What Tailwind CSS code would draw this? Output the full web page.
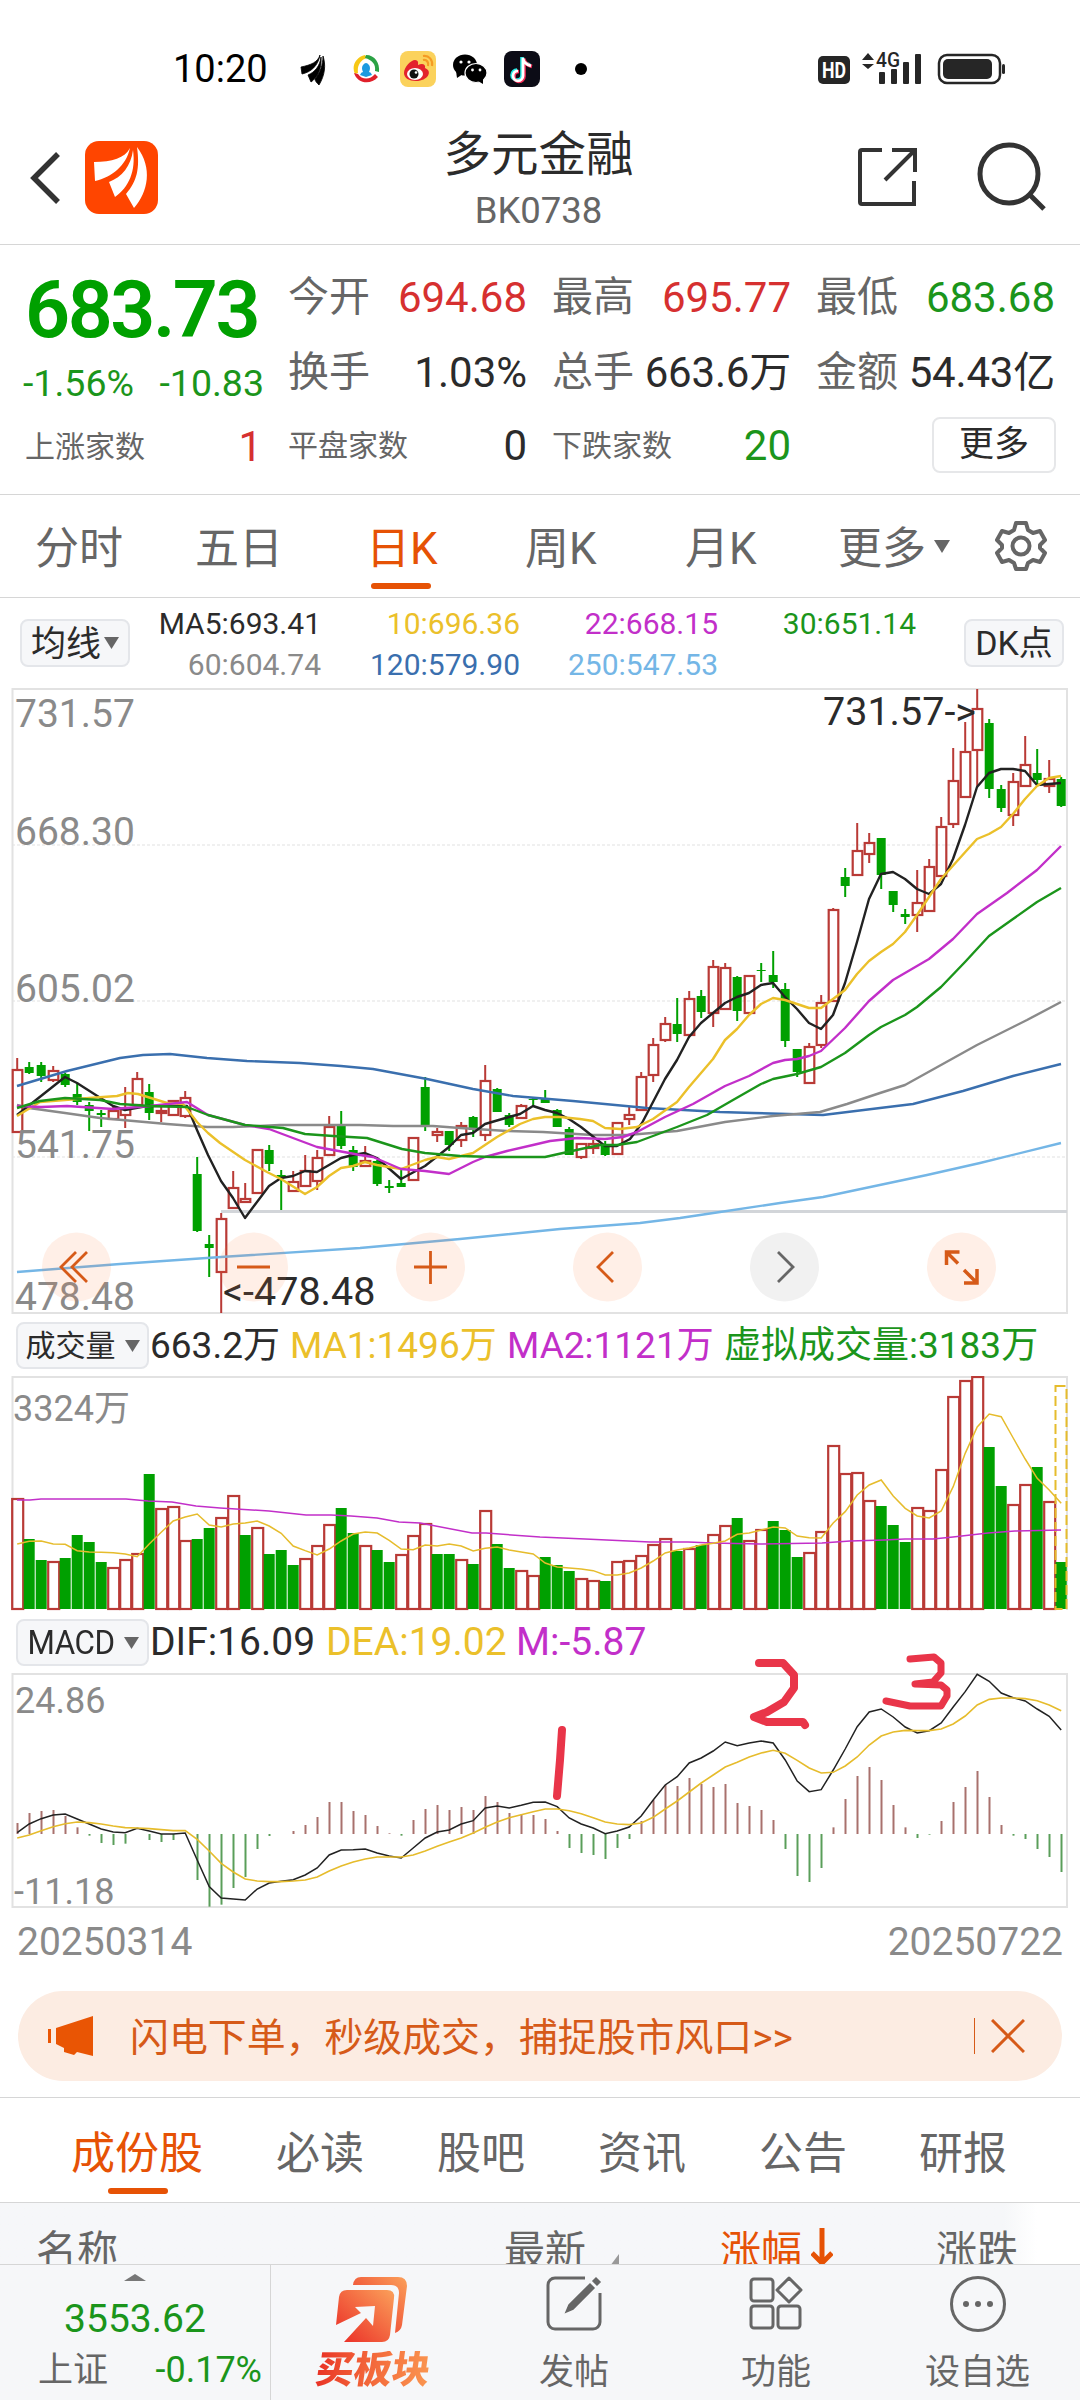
<!DOCTYPE html>
<html lang="zh-CN">
<head>
    <meta charset="UTF-8">
    <meta name="viewport" content="width=device-width, initial-scale=1.0">
    <title>多元金融 BK0738</title>
    <script src="https://cdn.jsdelivr.net/npm/@tailwindcss/browser@4"></script>
</head>
<body class="w-[1080px] h-[2400px] overflow-hidden bg-white text-[#2b2b2b] leading-none whitespace-nowrap font-['Roboto','Noto_Sans_CJK_SC',sans-serif]">
<div class="flex flex-col h-[2400px]">
    <!-- Status bar -->
    <div class="h-[138px] shrink-0 flex items-center pl-[173px] pr-[74px] text-black">
        <span class="w-[93px] text-[38px]">10:20</span>
        <svg class="ml-[34px] w-[28px] h-[32px]" viewBox="0 0 28 32">
            <path d="M20 2C18 9 11 12 1 14l1 7c9-2 16-8 18-19zM21 4c-1 9-6 15-13 18l3 7c6-4 11-13 10-25zM23 3c3 9 2 19-4 29-2-2-4-4-4-6 5-6 8-14 8-23z" stroke="#000" stroke-width=".8"/>
        </svg>
        <svg class="ml-[24px] w-[28px] h-[30px]" viewBox="0 0 28 30">
            <path d="M3 20C-1 12 4 3 13 1l2 3C8 6 5 12 6 19z" fill="#f7c815"/>
            <path d="M14 1c9 0 14 8 13 17l-4-1C24 10 20 6 13 4z" fill="#2ba245"/>
            <path d="M2 19c3 10 16 13 24 4l-3-3c-5 6-13 6-17 0z" fill="#e0202b"/>
            <path d="M8 21q1-3 3-3-2-4 0-7 3-4 6 0 2 3 0 7 2 0 3 3l-6 2z" fill="#1b9ae0"/>
        </svg>
        <svg class="ml-[20px] w-[36px] h-[36px]" viewBox="0 0 36 36">
            <rect width="36" height="36" rx="8" fill="#fbd25c"/>
            <path d="M4 22c0-6 7-13 11-13 4 0 3 4 3 5 4-2 8-1 7 3 8 3 3 13-9 13-7 0-12-3-12-8z" fill="#e3222c"/>
            <ellipse cx="15" cy="23" rx="8" ry="6" fill="#fff"/>
            <circle cx="14" cy="23" r="4.500" fill="#111"/><circle cx="16" cy="21.500" r="1.300" fill="#fff"/>
            <path d="M23 5c6-1 10 4 9 10M23 9c4-1 6 3 5 6" fill="none" stroke="#f59b23" stroke-width="2.200"/>
        </svg>
        <svg class="ml-[17px] w-[34px] h-[30px]" viewBox="0 0 34 30">
            <ellipse cx="12" cy="11" rx="12" ry="10.500"/><path d="M3 17l1 7 6-4z"/>
            <ellipse cx="23" cy="19" rx="11" ry="9.500" stroke="#fff" stroke-width="1.200"/><path d="M25 27l5 3 0-6z"/>
            <g fill="#fff"><circle cx="8" cy="8" r="1.600"/><circle cx="16" cy="8" r="1.600"/><circle cx="19.500" cy="16" r="1.400"/><circle cx="27" cy="16" r="1.400"/></g>
        </svg>
        <svg class="ml-[17px] w-[36px] h-[36px]" viewBox="0 0 36 36">
            <rect width="36" height="36" rx="8" fill="#0c0c16"/>
            <g fill="none" stroke-width="3.600"><path d="M18 6v18a5 5 0 1 1-5-5M18 7c1 4 4 6 8 7" stroke="#25e9e4"/><path d="M20 7.500v18a5 5 0 1 1-5-5M20 8.500c1 4 4 6 8 7" stroke="#f52b57"/><path d="M19 6.800v18a5 5 0 1 1-5-5M19 7.800c1 4 4 6 8 7" stroke="#fff" stroke-width="2.800"/></g>
        </svg>
        <span class="ml-[35px] size-[12px] rounded-full bg-black"></span>
        <svg class="ml-auto w-[188px] h-[34px]" viewBox="0 0 188 34" fill="#262626">
            <rect x="0" y="4" width="32" height="28" rx="5"/>
            <text x="16" y="26" font-size="22" font-weight="700" fill="#fff" text-anchor="middle" textLength="24" lengthAdjust="spacingAndGlyphs">HD</text>
            <path d="M44 8l6-7 6 7zM44 12l6 5 6-5z"/>
            <text x="58" y="15" font-size="20" font-weight="500" textLength="24" lengthAdjust="spacingAndGlyphs">4G</text>
            <rect x="61" y="20" width="6" height="12" rx="1"/><rect x="73" y="17" width="6" height="15" rx="1"/><rect x="85" y="10" width="6" height="22" rx="1"/><rect x="97" y="2" width="6" height="30" rx="1"/>
            <rect x="121" y="3" width="61" height="28" rx="8" fill="none" stroke="#262626" stroke-width="2.500"/>
            <rect x="125" y="7" width="49" height="20" rx="5"/><rect x="184" y="12" width="3" height="10" rx="1.500"/>
        </svg>
    </div>

    <!-- Title bar -->
    <header class="h-[107px] shrink-0 grid grid-cols-3 items-start border-b border-[#d6d6d6]">
        <div class="flex items-center pl-[29px] pt-[3px]">
            <svg class="w-[32px] h-[56px]" viewBox="0 0 32 56"><path d="M29 4L5 28l24 24" fill="none" stroke="#333" stroke-width="5.500"/></svg>
            <svg class="ml-[24px] w-[73px] h-[73px]" viewBox="0 0 73 73">
                <rect width="73" height="73" rx="14" fill="#ff4500"/>
                <path d="M45 7C40 17 27 21 9 21L10 40C27 36 41 25 45 7zM48 9c-2 16-11 27-24 32l6 15C44 46 51 30 48 9zM52 6c3 22 0 34-11 47l8 14C63 51 68 27 52 6z" fill="#fff"/>
            </svg>
        </div>
        <div class="flex flex-col items-center pr-[3px]">
            <h1 class="-mt-[6px] text-[47.500px]">多元金融</h1>
            <span class="mt-[13px] text-[36.500px] text-[#666]">BK0738</span>
        </div>
        <div class="flex items-center justify-end pr-[33px] pt-[4px] gap-[59px]">
            <svg class="w-[60px] h-[60px]" viewBox="0 0 60 60" fill="none" stroke="#333" stroke-width="4">
                <path d="M24 3H4a2 2 0 0 0-2 2v50a2 2 0 0 0 2 2h52V34"/><path d="M34 3h23v22M57 3L27 33"/>
            </svg>
            <svg class="w-[70px] h-[70px]" viewBox="0 0 70 70" fill="none" stroke="#333" stroke-width="5">
                <circle cx="32" cy="32" r="29"/><path d="M53 53l14 14"/>
            </svg>
        </div>
    </header>

    <!-- Quote -->
    <section class="h-[250px] shrink-0 flex border-b border-[#d6d6d6]">
        <div class="w-[264px] pl-[25px] flex flex-col text-[#00a000]">
            <span class="mt-[26px] h-[78px] text-[79px] font-semibold tracking-[-2.500px]">683.73</span>
            <div class="mt-[14px] flex justify-between text-[37.500px] text-[#1b951b] pt-[2px] -ml-[2px]"><span>-1.56%</span><span>-10.83</span></div>
            <div class="mt-[24px] h-[41px] flex justify-between items-center pr-[2px]"><span class="text-[30px] text-[#666]">上涨家数</span><span class="text-[42px] text-[#d63030]">1</span></div>
        </div>
        <div class="grow ml-[24px] mr-[24px] pt-[32px] grid grid-cols-[239px_239px_239px] gap-x-[25px] grid-rows-[75px_73px_41px] text-[42px] *:h-[41px] *:flex *:items-center *:justify-between">
            <div><span class="text-[41px] text-[#666]">今开</span><span class="text-[#d63030]">694.68</span></div>
            <div><span class="text-[41px] text-[#666]">最高</span><span class="text-[#d63030]">695.77</span></div>
            <div><span class="text-[41px] text-[#666]">最低</span><span class="text-[#1b951b]">683.68</span></div>
            <div><span class="text-[41px] text-[#666]">换手</span><span>1.03%</span></div>
            <div><span class="text-[41px] text-[#666]">总手</span><span class="tracking-[-0.200px]">663.6万</span></div>
            <div><span class="text-[41px] text-[#666]">金额</span><span class="tracking-[-0.200px]">54.43亿</span></div>
            <div><span class="text-[30px] text-[#666]">平盘家数</span><span>0</span></div>
            <div><span class="text-[30px] text-[#666]">下跌家数</span><span class="text-[#1b951b]">20</span></div>
            <div><button class="ml-auto -mr-[1px] -mt-[2px] w-[124px] h-[56px] shrink-0 border-2 border-[#e6e7e9] rounded-lg text-[35px]">更多</button></div>
        </div>
    </section>

    <!-- Period tabs -->
    <nav class="h-[103px] shrink-0 flex items-center border-b border-[#d6d6d6] pl-[35px] pt-[6px] pr-[33px] text-[44px] text-[#666]">
        <span class="w-[160px]">分时</span>
        <span class="w-[171px]">五日</span>
        <span class="w-[159px] h-full relative flex items-center text-[#e65205]">日K<i class="absolute left-[5px] bottom-[8px] w-[60px] h-[6px] rounded-full bg-[#e65205]"></i></span>
        <span class="w-[160px]">周K</span>
        <span class="w-[153px]">月K</span>
        <span class="flex items-center">更多<svg class="ml-[8px] -mt-[5px] w-[16px] h-[13px]" viewBox="0 0 16 13"><path d="M0 0h16L8 13z" fill="#666"/></svg></span>
        <svg class="ml-auto -mt-[6px] w-[52px] h-[52px]" viewBox="0 0 52 52" fill="none" stroke="#666" stroke-width="4" stroke-linejoin="round">
            <path d="M21 3h10l2 7 5 3 7-2 5 9-5 5v3l5 5-5 9-7-2-5 3-2 6H21l-2-6-5-3-7 2-5-9 5-5v-3l-5-5 5-9 7 2 5-3z"/><circle cx="26" cy="26" r="8.500"/>
        </svg>
    </nav>

    <!-- Moving averages -->
    <div class="h-[90px] shrink-0 flex items-center pl-[20px] pr-[16px]">
        <button class="w-[110px] h-[48px] border-2 border-[#e4e6ea] rounded-lg bg-[#f6f7f9] text-[35px] pt-[3px] flex items-center justify-center gap-[3px]">均线<svg class="-mt-[3px] w-[15px] h-[12px]" viewBox="0 0 15 12"><path d="M0 0h15L7.500 12z" fill="#666"/></svg></button>
        <div class="w-[787px] pt-[2px] grid grid-cols-[191px_199px_198px_198px] gap-y-[11px] text-[30px] text-right">
            <span>MA5:693.41</span><span class="text-[#ebc02a]">10:696.36</span><span class="text-[#c22fc9]">22:668.15</span><span class="text-[#1b951b]">30:651.14</span>
            <span class="text-[#8a8a8a]">60:604.74</span><span class="text-[#3a6fae]">120:579.90</span><span class="text-[#74b6e6]">250:547.53</span>
        </div>
        <button class="ml-auto w-[100px] h-[48px] border-2 border-[#e4e6ea] rounded-lg bg-[#f6f7f9] text-[34px]">DK点</button>
    </div>

    <!-- Candles -->
    <svg class="w-[1080px] h-[628px] shrink-0" viewBox="0 688 1080 628" fill="none">
        <path d="M12 845H1066M12 1001H1066M12 1157H1066" stroke="#ebebeb" stroke-width="1.500" stroke-dasharray="3 2"/>
        <path d="M12.500 689H1067V1313H12.500z" stroke="#e2e2e2" stroke-width="2"/>
        <g id="candles"></g>
        <path d="M221 1211.500H1067" stroke="#d2d5d9" stroke-width="3"/>
        <g stroke-width="2.400" stroke-linejoin="round">
            <polyline stroke="#74b6e6" points="17,1272 120,1264 221,1257 360,1248 460,1239 560,1229 640,1223 680,1218 720,1212 780,1203 823,1197 927,1175 980,1163 1061,1143"/>
            <polyline stroke="#3a6fae" points="17,1086 67,1071 120,1058 143,1055 170,1054 207,1058 247,1061 300,1063 341,1066 373,1069 427,1079 473,1089 513,1096 573,1101 647,1108 720,1112 753,1113 823,1115 880,1108 913,1104 963,1091 1013,1076 1061,1064"/>
            <polyline stroke="#8a8a8a" points="17,1105 29,1108 65,1113 100,1118 167,1124 207,1127 233,1127 280,1125 360,1125 393,1126 433,1126 460,1128 507,1131 543,1132 593,1135 627,1135 677,1131 725,1122 773,1116 820,1112 847,1104 880,1093 905,1085 977,1045 1027,1020 1061,1002"/>
            <polyline stroke="#222" points="17,1115 65,1077 77,1083 113,1106 125,1110 147,1106 187,1106 197,1130 208,1155 221,1181 233,1198 245,1218 269,1186 281,1178 293,1176 305,1171 317,1172 341,1158 353,1155 365,1153 377,1158 401,1179 425,1166 449,1147 461,1135 473,1133 485,1124 509,1117 520,1114 533,1106 545,1110 557,1113 569,1119 581,1127 605,1146 617,1146 630,1139 642,1123 653,1102 665,1079 677,1060 689,1037 701,1023 713,1013 725,1003 737,997 749,993 761,985 773,983 785,997 797,1009 809,1023 821,1029 833,1015 845,983 857,942 869,899 881,874 893,872 905,879 917,889 929,894 941,884 953,859 965,825 977,787 989,773 1001,769 1013,769 1025,771 1037,785 1049,784 1061,783"/>
            <polyline stroke="#ebc02a" points="17,1116 40,1102 65,1100 89,1098 117,1096 128,1093 138,1094 167,1103 183,1104 197,1122 208,1133 220,1143 245,1160 267,1172 281,1179 305,1194 317,1187 329,1176 341,1168 353,1166 365,1162 377,1165 401,1169 425,1160 437,1157 449,1159 473,1153 497,1137 520,1124 533,1119 545,1117 560,1117 580,1119 593,1121 605,1128 620,1129 637,1127 653,1119 677,1102 689,1087 713,1059 725,1040 737,1029 749,1015 761,1004 773,998 785,1000 797,1004 809,1008 821,1008 833,999 845,990 857,974 869,961 881,952 893,944 905,932 917,915 929,897 941,879 977,839 989,834 1001,827 1013,814 1025,799 1037,786 1049,778 1061,776"/>
            <polyline stroke="#c22fc9" points="17,1106 41,1107 67,1106 113,1109 150,1106 187,1102 208,1115 245,1125 269,1129 317,1147 360,1155 373,1157 401,1169 425,1171 449,1174 473,1162 485,1157 507,1151 533,1145 550,1141 577,1138 605,1139 623,1137 637,1132 665,1117 693,1104 725,1086 749,1076 773,1063 785,1060 797,1059 809,1056 821,1051 845,1028 869,1001 893,980 929,959 953,939 977,914 1007,893 1037,870 1061,846"/>
            <polyline stroke="#1b951b" points="17,1108 40,1101 65,1098 100,1100 120,1104 150,1106 187,1107 208,1115 245,1125 283,1128 305,1134 333,1136 367,1138 402,1149 425,1153 460,1156 493,1157 545,1157 581,1149 600,1145 617,1145 637,1142 677,1127 707,1115 733,1100 761,1084 773,1079 797,1074 821,1067 845,1053 869,1035 881,1027 905,1015 917,1007 941,987 965,962 989,936 1013,919 1037,902 1061,888"/>
        </g>
        <g fill="#8a8a8a" font-size="39">
            <text x="15" y="727">731.57</text><text x="15" y="845">668.30</text><text x="15" y="1002">605.02</text><text x="15" y="1158">541.75</text><text x="15" y="1310">478.48</text>
        </g>
        <g fill="#2b2b2b" font-size="39.500"><text x="823" y="725">731.57-&gt;</text><text x="223" y="1305">&lt;-478.48</text></g>
        <!-- Chart controls -->
        <g fill="#fb7a3a" fill-opacity=".12">
            <circle cx="76.500" cy="1267" r="34.500"/><circle cx="253.500" cy="1267" r="34.500"/><circle cx="430.500" cy="1267" r="34.500"/><circle cx="607.500" cy="1267" r="34.500"/><circle cx="784.500" cy="1267" r="34.500" fill="#888"/><circle cx="961.500" cy="1267" r="34.500"/>
        </g>
        <g stroke="#d65a18" stroke-width="2.800">
            <path d="M76 1252l-15 15 15 15M87 1252l-15 15 15 15M237 1267h33M414 1267h33M430.500 1251v33M613 1252l-15 15 15 15"/>
            <path d="M778 1252l15 15-15 15" stroke="#666"/>
            <path d="M946.500 1265v-13h13M947 1252.500l11 11M977 1269v14h-13M976 1282l-12-12" stroke-width="3.500"/>
        </g>
    </svg>

    <!-- Volume -->
    <div class="h-[60px] shrink-0 flex items-center pl-[16px] pb-[1px] text-[37px]">
        <button class="w-[133px] h-[47px] shrink-0 border-2 border-[#e4e6ea] rounded-lg bg-[#f6f7f9] text-[30px] flex items-center justify-center gap-[9px]">成交量<svg class="w-[15px] h-[12px]" viewBox="0 0 15 12"><path d="M0 0h15L7.500 12z" fill="#666"/></svg></button>
        <span class="w-[141px] pl-[1px]">663.2万</span>
        <span class="w-[217px] text-[#ebc02a]">MA1:1496万</span>
        <span class="w-[217px] text-[#c22fc9]">MA2:1121万</span>
        <span class="text-[#1b951b]">虚拟成交量:3183万</span>
    </div>
    <svg class="w-[1080px] h-[236px] shrink-0" viewBox="0 1376 1080 236" fill="none">
        <path d="M12.500 1610V1377H1067V1610" stroke="#e2e2e2" stroke-width="2"/>
        <text x="13" y="1421" font-size="36" fill="#8a8a8a">3324万</text>
        <g id="volume"></g>
        <rect x="1055.500" y="1386" width="11" height="223" stroke="#e6bc2c" stroke-width="2" stroke-dasharray="10 4"/>
        <polyline stroke="#c22fc9" stroke-width="1.500" points="17,1500 30,1500 41,1499 126,1499 148,1501 172,1502 196,1506 220,1508 269,1511 306,1515 331,1515 351,1516 377,1518 399,1522 420,1523 472,1533 486,1533 540,1537 585,1539 650,1542 688,1542 712,1543 760,1544 822,1543 850,1541 884,1540 905,1539 933,1539 953,1537 988,1533 1015,1531 1061,1530"/>
        <polyline id="vol_ma" stroke="#e6bc2c" stroke-width="1.500"/>
    </svg>

    <!-- MACD -->
    <div class="h-[61px] shrink-0 flex items-center pl-[16px] text-[39px]">
        <button class="w-[133px] h-[47px] shrink-0 border-2 border-[#e4e6ea] rounded-lg bg-[#f6f7f9] text-[33px] flex items-center justify-center gap-[9px]"><span class="w-[90px] flex justify-center origin-center scale-x-95 tracking-[-0.500px]">MACD</span><svg class="-ml-[1px] w-[15px] h-[12px]" viewBox="0 0 15 12"><path d="M0 0h15L7.500 12z" fill="#666"/></svg></button>
        <span class="w-[177px] pl-[1px]">DIF:16.09</span>
        <span class="w-[190px] text-[#ebc02a]">DEA:19.02</span>
        <span class="text-[#c22fc9]">M:-5.87</span>
    </div>
    <svg class="w-[1080px] h-[297px] shrink-0 overflow-visible" viewBox="0 1673 1080 297" fill="none">
        <path d="M12.500 1674H1067V1907H12.500z" stroke="#e2e2e2" stroke-width="2"/>
        <g id="macd"></g>
        <polyline id="dif" stroke="#222" stroke-width="1.500"/>
        <polyline id="dea" stroke="#e6bc2c" stroke-width="1.600"/>
        <g fill="#8a8a8a">
            <text x="15" y="1713" font-size="36">24.86</text><text x="14" y="1904" font-size="36">-11.18</text>
            <text x="17" y="1955" font-size="39">20250314</text><text x="1063" y="1955" font-size="39" text-anchor="end">20250722</text>
        </g>
        <!-- Hand-drawn wave marks -->
        <g stroke="#e93549" stroke-width="8" stroke-linecap="round" stroke-linejoin="round">
            <path d="M562 1730l-2 30-3 36"/>
            <path d="M759 1663h24l11 12v13l-10 14-17 10-13 5 13 5h36l2 3"/>
            <path d="M910 1659l24-2 7 6v10l-8 9-18 2 26 1 6 5v6l-6 10h-31l-24-5" stroke-width="7"/>
        </g>
    </svg>

    <!-- Notice -->
    <div class="mt-[21px] h-[90px] shrink-0 mx-[18px] rounded-full bg-[#fcece2] flex items-center pl-[29px] pr-[37px] text-[#d65a18]">
        <svg class="w-[46px] h-[40px]" viewBox="0 0 46 40" fill="#e95504"><path d="M1 13h3v14H1zM9 12L46 0v40l-16-4-3 3-10-3v-4l-8-4z"/></svg>
        <span class="ml-[37px] pt-[4px] text-[38.900px]">闪电下单，秒级成交，捕捉股市风口&gt;&gt;</span>
        <i class="ml-auto w-[1.500px] h-[36px] bg-[#d65a18]"></i>
        <svg class="ml-[16px] w-[34px] h-[34px]" viewBox="0 0 34 34"><path d="M1 1l32 32M33 1L1 33" stroke="#d65a18" stroke-width="3"/></svg>
    </div>

    <!-- Section tabs -->
    <nav class="mt-[16px] h-[106px] shrink-0 flex items-center border-y border-[#d6d6d6] pl-[71px] pt-[7px] text-[44px] text-[#666]">
        <span class="w-[205px] h-full relative flex items-center text-[#e65205]">成份股<i class="absolute left-[37px] bottom-[8px] w-[60px] h-[6px] rounded-full bg-[#e65205]"></i></span>
        <span class="w-[161px]">必读</span>
        <span class="w-[161px]">股吧</span>
        <span class="w-[161px]">资讯</span>
        <span class="w-[160px]">公告</span>
        <span>研报</span>
    </nav>

    <!-- Table header, cut by the bottom bar -->
    <div class="h-[61px] shrink-0 overflow-hidden flex pt-[28px] pl-[36px] bg-linear-to-r from-[#f6f7f9] from-93% to-white to-96% text-[41px] text-[#666]">
        <span class="w-[468px]">名称</span>
        <span class="w-[216px] flex">最新<svg class="ml-[24px] mt-[23px] w-[9px] h-[12px]" viewBox="0 0 9 12"><path d="M9 0v12H0z" fill="#999"/></svg></span>
        <span class="w-[216px] flex text-[#e65205]">涨幅<svg class="ml-[9px] -mt-[3px] w-[22px] h-[38px]" viewBox="0 0 22 38" fill="none" stroke="#e65205" stroke-width="5"><path d="M11 0v35M1 25l10 10 10-10"/></svg></span>
        <span>涨跌</span>
    </div>

    <!-- Bottom bar -->
    <footer class="grow flex border-t border-[#d6d6d6] bg-[#f6f7f9] text-[35px] text-[#666]">
        <div class="w-[271px] border-r border-[#d6d6d6] flex flex-col items-center pt-[9px]">
            <svg class="w-[22px] h-[7px]" viewBox="0 0 22 7"><path d="M0 7L11 0l11 7z" fill="#777"/></svg>
            <span class="mt-[19px] text-[39px] text-[#1b951b]">3553.62</span>
            <div class="mt-[13px] w-full pl-[38px] pr-[8px] flex justify-between items-center"><span>上证</span><span class="text-[36px] text-[#1b951b]">-0.17%</span></div>
        </div>
        <div class="w-[202px] flex flex-col items-center pt-[12px]">
            <svg class="w-[72px] h-[65px]" viewBox="0 0 72 65">
                <defs><linearGradient id="hot" x1="0" y1="1" x2="1" y2="0"><stop offset="0" stop-color="#ea2a25"/><stop offset="1" stop-color="#fba05a"/></linearGradient></defs>
                <path d="M17 8q1-8 8-8h37q9 0 9 9l-5 39q-1 6-7 8l4-40q0-8-8-8z" fill="url(#hot)"/>
                <path d="M3 20q1-7 8-7h40q8 0 7 8l-4 37q-1 7-8 7H8L30 41l7 8 2-20-20 1 6 6L0 48z" fill="url(#hot)"/>
            </svg>
            <span class="mt-[9px] ml-[2px] text-[38px] font-black skew-x-[-8deg] bg-linear-to-r from-[#e93026] to-[#fa9550] bg-clip-text text-transparent">买板块</span>
        </div>
        <div class="w-[202px] flex flex-col items-center pt-[11px]">
            <svg class="w-[56px] h-[56px]" viewBox="0 0 56 56" fill="none" stroke="#666" stroke-width="3">
                <path d="M39 2H9a7 7 0 0 0-7 7v37a7 7 0 0 0 7 7h38a7 7 0 0 0 7-7V17"/><path d="M20 36l3-7L44 8l4 4-21 21zM47 5l3-3 4 4-3 3z" fill="#666" stroke-width="1.500"/>
            </svg>
            <span class="mt-[23px]">发帖</span>
        </div>
        <div class="w-[202px] flex flex-col items-center pt-[11px]">
            <svg class="w-[54px] h-[56px]" viewBox="0 0 54 56" fill="none" stroke="#666" stroke-width="3">
                <rect x="2" y="3" width="22" height="22" rx="3"/><rect x="2" y="30" width="22" height="22" rx="3"/><rect x="29" y="30" width="22" height="22" rx="3"/><path d="M40 2l12 12-12 12-12-12z" stroke-linejoin="round"/>
            </svg>
            <span class="mt-[23px]">功能</span>
        </div>
        <div class="grow flex flex-col items-center pt-[11px] pr-[2px]">
            <svg class="w-[56px] h-[56px]" viewBox="0 0 56 56" fill="#666">
                <circle cx="28" cy="28" r="26.500" fill="none" stroke="#666" stroke-width="3"/><circle cx="16" cy="28" r="3"/><circle cx="28" cy="28" r="3"/><circle cx="40" cy="28" r="3"/>
            </svg>
            <span class="mt-[23px]">设自选</span>
        </div>
    </footer>
</div>
<script>
    const RED = '#b93a36', GREEN = '#00a000';
    const x = i => 17.2 + 12 * i;

    // Colour, high, body top, body bottom, low
    const candles = `r1058,1070,1132,1132 g1062,1067,1073,1074 g1062,1065,1076,1082 r1066,1071,1080,1082 g1073,1074,1085,1087 g1083,1094,1102,1105 g1102,1105,1111,1131 g1110,1113,1115,1127
        r1107,1111,1119,1119 r1087,1109,1115,1128 r1072,1079,1105,1106 g1084,1092,1113,1120 r1104,1111,1113,1122 r1100,1101,1115,1116 r1091,1098,1116,1118 g1157,1174,1231,1232
        g1235,1244,1248,1277 r1213,1219,1272,1313 r1171,1188,1208,1209 r1183,1199,1202,1203 r1149,1150,1193,1193 g1145,1150,1164,1171 g1170,1175,1178,1210 r1171,1182,1191,1191
        r1155,1171,1186,1187 r1150,1158,1181,1190 r1116,1127,1155,1156 g1111,1126,1146,1149 g1146,1150,1167,1171 r1146,1161,1166,1166 g1160,1161,1184,1186 g1180,1186,1188,1193
        g1170,1183,1187,1187 r1137,1138,1180,1181 g1077,1087,1125,1131 r1128,1132,1135,1142 g1131,1131,1145,1151 r1122,1126,1140,1147 g1116,1117,1130,1137 r1065,1081,1135,1141
        g1088,1089,1112,1112 g1113,1115,1125,1127 r1104,1106,1118,1119 g1097,1099,1100,1107 g1090,1098,1103,1103 g1109,1110,1127,1127 g1127,1129,1155,1155 r1143,1144,1157,1159
        r1140,1144,1148,1154 g1141,1144,1155,1156 r1122,1123,1154,1155 r1107,1115,1119,1125 r1072,1077,1110,1110 r1038,1045,1075,1082 r1017,1024,1040,1042 g998,1024,1034,1042
        r991,999,1035,1036 g990,996,1012,1018 r960,967,1013,1027 r963,968,1009,1010 g976,977,1011,1021 r975,976,1013,1013 g963,970,971,982 g951,975,982,988
        g983,989,1041,1047 g1049,1049,1072,1077 r1043,1047,1083,1083 r995,1003,1045,1048 r908,910,1001,1001 g868,877,886,897 r823,851,875,875 r833,843,854,863
        g838,838,875,889 g891,891,905,912 g909,914,917,924 r870,903,915,932 r859,867,911,911 r817,827,876,876 r748,781,824,828 r722,752,797,797
        r689,709,750,786 g719,723,789,798 g785,789,808,812 r773,782,815,826 r736,765,786,786 g749,773,780,785 r760,779,786,793 g777,779,806,807`.trim().split(/\s+/);

    document.getElementById('candles').innerHTML = candles.map((c, i) => {
        const [hi, top, bot, lo] = c.slice(1).split(',').map(Number);
        const cx = x(i);
        if (c[0] === 'g') {
            return `<path d="M${cx} ${hi}V${lo}" stroke="${GREEN}" stroke-width="2"/><rect x="${cx - 4.5}" y="${top}" width="9" height="${Math.max(bot - top, 1)}" fill="${GREEN}"/>`;
        }
        return `<path d="M${cx} ${hi}V${top}M${cx} ${bot}V${lo}" stroke="${RED}" stroke-width="2"/><rect x="${cx - 4.5}" y="${top}" width="9.6" height="${Math.max(bot - top, 1)}" stroke="${RED}" stroke-width="2.200"/>`;
    }).join('');

    // Bar heights in px
    const volume = `r110 g70 g49 r47 g51 g74 g67 g47 r41 r49 r55 g135 r100 r102 r68 g70 g81 r91 r113 g74 r81 g55 g59 g44 r50 r63 r84 g101 g76 r63 g59 g47 r54 r73 r85 g55 g55 r49 g45 r98 g65 g41 r38 r33
        g52 g44 g38 r30 r28 g28 r47 r48 r53 r64 r70 g58 r60 g64 r74 r83 g91 r68 r79 g88 g79 g52 r56 r77 r163 r135 r136 r108 g103 g84 g67 r101 r98 r139 r212 r228 r232 g162 g123 r104 r124 g142 r107 g47`.trim().split(/\s+/);

    document.getElementById('volume').innerHTML = volume.map((v, i) => {
        const h = +v.slice(1), left = x(i) - 5;
        return v[0] === 'g'
            ? `<rect x="${left - .5}" y="${1609 - h}" width="11" height="${h}" fill="${GREEN}"/>`
            : `<rect x="${left}" y="${1609 - h}" width="11" height="${h}" stroke="${RED}" stroke-width="2.200"/>`;
    }).join('');

    // Series below are offsets from y0 in thirds of a pixel, one per candle
    const line = (id, y0, list) => document.getElementById(id).setAttribute('points', list.map((v, i) => `${x(i)},${y0 + v / 3}`).join(' '));

    line('vol_ma', 1300, [732,724,723,732,733,752,756,757,758,762,770,732,697,663,651,642,675,681,672,669,663,678,700,738,752,765,747,723,702,696,699,721,747,749,735,738,732,738,753,745,741,750,756,762,
        789,801,804,807,812,825,825,819,804,783,759,750,744,735,730,723,703,699,690,681,684,708,713,714,669,635,585,555,540,588,625,648,654,633,560,460,381,342,350,414,477,535,570,610]);
    line('dif', 1610, [668,642,626,615,612,627,642,657,666,668,655,663,672,672,669,750,830,864,867,870,837,819,814,809,795,774,735,720,719,717,729,738,744,714,684,666,660,642,632,594,588,594,586,577,
        576,590,624,642,654,671,663,651,618,570,525,500,459,444,423,396,407,399,393,399,450,513,545,539,480,417,350,306,297,321,351,369,362,339,291,245,193,214,249,263,273,297,319,360]);
    line('dea', 1610, [684,675,662,650,641,636,638,642,648,653,654,656,659,662,662,688,723,760,786,807,813,815,815,813,810,801,783,768,756,747,741,741,741,735,723,709,696,684,669,652,636,623,614,605,
        597,597,602,611,623,636,642,644,639,622,597,573,546,519,495,471,457,441,429,421,430,451,474,489,487,468,441,405,378,366,361,362,362,357,342,318,285,268,264,264,266,272,285,302]);

    const macd = [639,609,603,600,618,652,677,699,705,701,672,690,696,690,672,810,890,884,834,801,717,678,672,663,645,621,576,576,603,615,648,670,677,630,597,585,600,591,600,558,576,609,612,615,
        627,663,714,729,735,747,714,687,633,570,525,528,504,522,531,522,579,588,600,630,717,798,816,774,652,567,498,471,510,585,652,684,674,633,576,531,483,561,645,677,687,717,741,786];
    document.getElementById('macd').innerHTML = macd.map((v, i) =>
        `<path d="M${x(i) + .3} 1834V${1610 + v / 3}" stroke="${v > 672 ? '#5a9e5a' : '#a8716d'}" stroke-width="2"/>`).join('');
</script>
</body>
</html>
